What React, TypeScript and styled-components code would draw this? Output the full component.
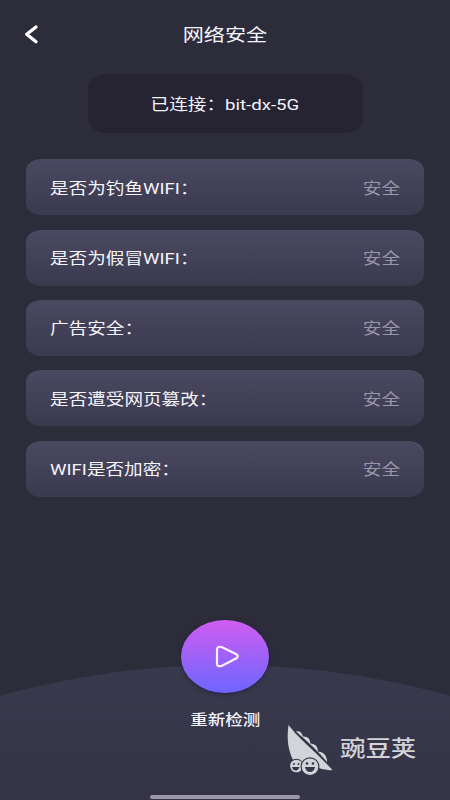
import React from "react";
import styled, { createGlobalStyle } from "styled-components";

const GlobalStyle = createGlobalStyle`
  *, *::before, *::after { box-sizing: border-box; }
  body { margin: 0; background: #2d2c3b; overflow: hidden; }
`;

const Screen = styled.main`
  display: flex;
  flex-direction: column;
  width: 450px;
  height: 800px;
  overflow: hidden;
  background: #2d2c3b;
  color: #f4f4fb;
  font-family: Roboto, "Noto Sans CJK SC", sans-serif;
`;

const Label = styled.span<{ $size: number; $origin?: string; $weight?: number }>`
  display: inline-block;
  font-size: ${(p) => p.$size}px;
  font-weight: ${(p) => p.$weight ?? 400};
  line-height: 24px;
  white-space: nowrap;
  transform: scaleX(1.2);
  transform-origin: ${(p) => p.$origin ?? "center"};
`;

const Header = styled.header`
  display: grid;
  grid-template-columns: 62px 1fr 62px;
  align-items: center;
  height: 68px;
  padding-top: 1px;
  text-align: center;
`;

const BackButton = styled.button`
  display: flex;
  padding: 0 0 0 22px;
  border: 0;
  background: none;
`;

const Network = styled.section`
  display: flex;
  align-items: center;
  justify-content: center;
  width: 275px;
  height: 59px;
  margin: 6px auto 0;
  padding-top: 2px;
  border-radius: 18px / 15px;
  background: #262433;
`;

const Checks = styled.ul`
  display: flex;
  flex-direction: column;
  gap: 14.4px;
  margin: 26.2px 26px 0;
  padding: 0;
  list-style: none;
`;

const Check = styled.li`
  display: flex;
  align-items: center;
  justify-content: space-between;
  height: 56px;
  padding: 3px 24px 0;
  border-radius: 15px / 12px;
  background: linear-gradient(#4b4961, #3a394e);
`;

const Status = styled.span`
  color: #9997ab;
`;

const Footer = styled.footer`
  position: relative;
  isolation: isolate;
  display: flex;
  flex: none;
  flex-direction: column;
  align-items: center;
  height: 180px;
  margin-top: auto;

  &::before {
    content: "";
    position: absolute;
    z-index: -1;
    inset: 45px 0 0;
    background: linear-gradient(#39394d, #353346);
    clip-path: ellipse(699px 582px at 50% 582px);
  }
`;

const ScanButton = styled.button`
  display: flex;
  align-items: center;
  justify-content: center;
  width: 88px;
  height: 73px;
  padding: 0 0 0 4px;
  border: 0;
  border-radius: 50%;
  background: linear-gradient(#d05df0, #6c66ff);
  box-shadow: 0 1px 4px #251f42;
`;

const ScanLabel = styled.div`
  margin-top: 15px;
`;

const HomeIndicator = styled.div`
  width: 150px;
  height: 4px;
  margin-top: auto;
  margin-bottom: 1px;
  border-radius: 2px;
  background: #9a98a8;
`;

const Watermark = styled.div`
  position: absolute;
  top: 100px;
  left: 284px;
  display: flex;
  align-items: center;
  gap: 2px;
  height: 60px;
  color: #d3d3da;
`;

const WatermarkName = styled.div`
  padding-bottom: 3px;
`;

const checks = ["是否为钓鱼WIFI：", "是否为假冒WIFI：", "广告安全：", "是否遭受网页篡改：", "WIFI是否加密："];

function PeaPod() {
  return (
    <svg width="54" height="60" viewBox="0 0 54 60" fill="currentColor">
      <path d="M12 11.5Q17 10 19 16.5Q26 16 26.5 23.5Q34 24 34 31.5Q42 32 43 40L42.5 42.5C33 32 23 21 12 11.5Z" />
      <path d="M4.5 5C15 19 33 33 48.5 50Q41 51 32 47L9 40C3 28 3 15 4.5 5Z" />
      <path d="M11 12C21 20 33 31 42 42" fill="none" stroke="#37364a" strokeWidth="1.6" />
      <circle cx="12.4" cy="46" r="7.2" fill="#37364a" />
      <circle cx="12.4" cy="46" r="6.3" />
      <circle cx="26" cy="46.7" r="9.5" fill="#37364a" />
      <circle cx="26" cy="46.7" r="8.3" />
      <g fill="#37364a">
        <circle cx="10" cy="44" r="1" />
        <circle cx="14.5" cy="44" r="1" />
        <path d="M8 47H15.5Q14 51 11.5 50.5Q9 50.5 8 47Z" />
        <circle cx="23" cy="43.5" r="1.3" />
        <circle cx="29" cy="43.5" r="1.3" />
        <path d="M21 47H31Q30 52 26 52Q22 52 21 47Z" />
      </g>
    </svg>
  );
}

export default function App() {
  return (
    <Screen>
      <GlobalStyle />
      <Header>
        <BackButton aria-label="返回">
          <svg width="18" height="22" viewBox="0 0 18 22" fill="none" stroke="#fff" strokeWidth="3.3" strokeLinecap="round" strokeLinejoin="round">
            <path d="M14 3 4.7 10.3 14 17.8" />
          </svg>
        </BackButton>
        <Label $size={17.6}>网络安全</Label>
        <span />
      </Header>
      <Network>
        <Label $size={15.5}>已连接：bit-dx-5G</Label>
      </Network>
      <Checks>
        {checks.map((name) => (
          <Check key={name}>
            <Label $size={15.5} $origin="left">{name}</Label>
            <Status>
              <Label $size={15.6} $origin="right">安全</Label>
            </Status>
          </Check>
        ))}
      </Checks>
      <Footer>
        <ScanButton aria-label="重新检测">
          <svg width="26" height="24" viewBox="0 0 26 24" fill="none" stroke="#fff0ff" strokeWidth="2.2" strokeLinejoin="round">
            <path d="M3 5Q3 .8 7.5 2L22 9Q25.5 11.3 22 13.5L8 20.7Q3 22.3 3 18.5Z" />
          </svg>
        </ScanButton>
        <ScanLabel>
          <Label $size={14.6} $weight={500}>重新检测</Label>
        </ScanLabel>
        <HomeIndicator />
        <Watermark>
          <PeaPod />
          <WatermarkName>
            <Label $size={21.2} $weight={500} $origin="left">豌豆荚</Label>
          </WatermarkName>
        </Watermark>
      </Footer>
    </Screen>
  );
}
